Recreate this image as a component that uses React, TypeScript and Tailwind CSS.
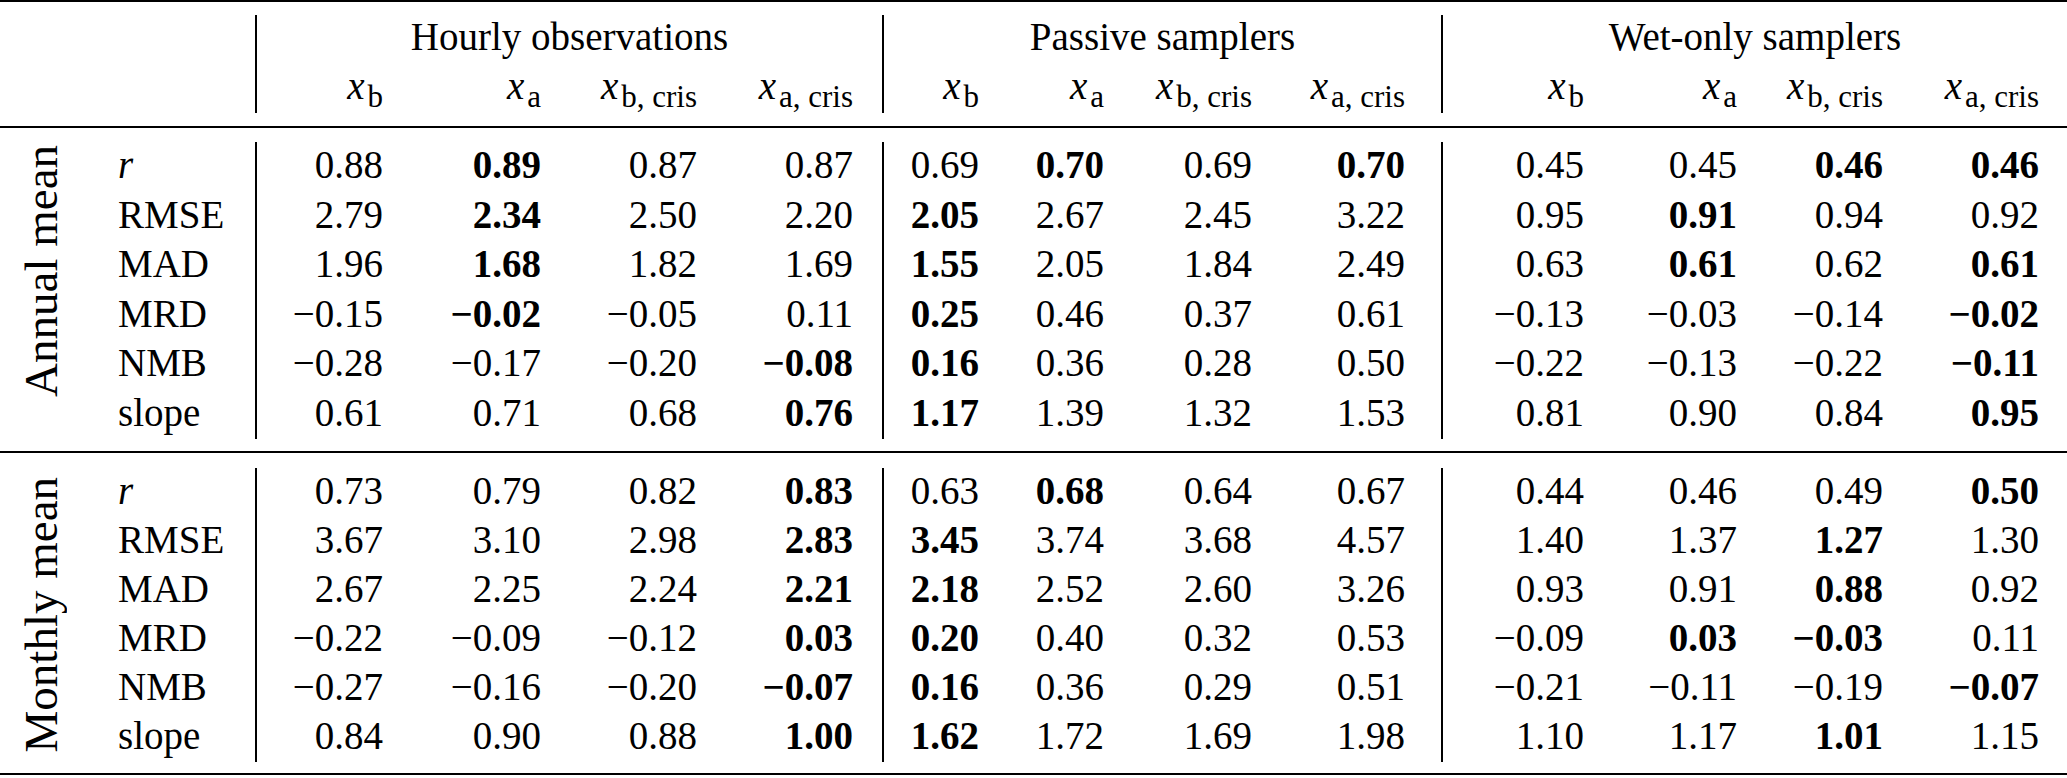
const groups = [
  { title: "Hourly observations", cols: ["w-[126px]", "w-[158px]", "w-[156px]", "w-[156px]"], pad: "pr-[29px]" },
  { title: "Passive samplers", cols: ["w-[95px]", "w-[125px]", "w-[148px]", "w-[153px]"], pad: "pr-[36px]" },
  { title: "Wet-only samplers", cols: ["w-[141px]", "w-[153px]", "w-[146px]", "w-[156px]"], pad: "pr-[28px]" },
]

const subs = ["b", "a", "b, cris", "a, cris"]

const labels = ["r", "RMSE", "MAD", "MRD", "NMB", "slope"]

// values marked with * are set in bold
const annual = [
  ["0.88", "*0.89", "0.87", "0.87", "0.69", "*0.70", "0.69", "*0.70", "0.45", "0.45", "*0.46", "*0.46"],
  ["2.79", "*2.34", "2.50", "2.20", "*2.05", "2.67", "2.45", "3.22", "0.95", "*0.91", "0.94", "0.92"],
  ["1.96", "*1.68", "1.82", "1.69", "*1.55", "2.05", "1.84", "2.49", "0.63", "*0.61", "0.62", "*0.61"],
  ["−0.15", "*−0.02", "−0.05", "0.11", "*0.25", "0.46", "0.37", "0.61", "−0.13", "−0.03", "−0.14", "*−0.02"],
  ["−0.28", "−0.17", "−0.20", "*−0.08", "*0.16", "0.36", "0.28", "0.50", "−0.22", "−0.13", "−0.22", "*−0.11"],
  ["0.61", "0.71", "0.68", "*0.76", "*1.17", "1.39", "1.32", "1.53", "0.81", "0.90", "0.84", "*0.95"],
]

const monthly = [
  ["0.73", "0.79", "0.82", "*0.83", "0.63", "*0.68", "0.64", "0.67", "0.44", "0.46", "0.49", "*0.50"],
  ["3.67", "3.10", "2.98", "*2.83", "*3.45", "3.74", "3.68", "4.57", "1.40", "1.37", "*1.27", "1.30"],
  ["2.67", "2.25", "2.24", "*2.21", "*2.18", "2.52", "2.60", "3.26", "0.93", "0.91", "*0.88", "0.92"],
  ["−0.22", "−0.09", "−0.12", "*0.03", "*0.20", "0.40", "0.32", "0.53", "−0.09", "*0.03", "*−0.03", "0.11"],
  ["−0.27", "−0.16", "−0.20", "*−0.07", "*0.16", "0.36", "0.29", "0.51", "−0.21", "−0.11", "−0.19", "*−0.07"],
  ["0.84", "0.90", "0.88", "*1.00", "*1.62", "1.72", "1.69", "1.98", "1.10", "1.17", "*1.01", "1.15"],
]

function Rule() {
  return <div className="h-[2px] w-full bg-black" />
}

function Sym({ sub }: { sub: string }) {
  return (
    <span className="whitespace-nowrap">
      <span className="pr-[3px] italic">x</span>
      <span className="align-[-8px] text-[31px]">{sub}</span>
    </span>
  )
}

function Value({ v }: { v: string }) {
  const bold = v.startsWith("*")
  return <span className={bold ? "font-bold" : ""}>{bold ? v.slice(1) : v}</span>
}

function Header() {
  return (
    <div className="flex py-[13px]">
      <div className="w-[255px] shrink-0" />
      {groups.map((g) => (
        <div key={g.title} className="flex flex-col border-l-2 border-black">
          <div className="h-[49px] text-center leading-[44px]">{g.title}</div>
          <div className={`flex ${g.pad}`}>
            {g.cols.map((w, i) => (
              <div key={i} className={`${w} h-[49px] text-right leading-[44px]`}>
                <Sym sub={subs[i]} />
              </div>
            ))}
          </div>
        </div>
      ))}
    </div>
  )
}

function Section({
  title,
  rows,
  className,
  labelClass,
  rowClass,
}: {
  title: string
  rows: string[][]
  className: string
  labelClass: string
  rowClass: string
}) {
  return (
    <div className={`flex ${className}`}>
      <div className={`flex w-[100px] shrink-0 items-center pl-[18px] ${labelClass}`}>
        <span className="rotate-180 text-[47px] leading-none whitespace-nowrap [writing-mode:vertical-rl]">{title}</span>
      </div>
      <div className="flex flex-col">
        {rows.map((row, r) => (
          <div key={r} className={`flex leading-[45px] ${rowClass}`}>
            <div className={`w-[155px] shrink-0 pl-[18px] ${r === 0 ? "italic" : ""}`}>{labels[r]}</div>
            {groups.map((g, gi) => (
              <div key={g.title} className={`flex border-l-2 border-black ${g.pad}`}>
                {g.cols.map((w, ci) => (
                  <div key={ci} className={`${w} text-right`}>
                    <Value v={row[gi * 4 + ci]} />
                  </div>
                ))}
              </div>
            ))}
          </div>
        ))}
      </div>
    </div>
  )
}

export default function App() {
  return (
    <div className="h-[778px] w-[2067px] bg-white text-[39px] text-black [font-family:Liberation_Serif,Times_New_Roman,serif]">
      <Rule />
      <Header />
      <Rule />
      <Section
        title="Annual mean"
        rows={annual}
        className="pt-[14px] pb-[12px]"
        labelClass="pb-[40px]"
        rowClass="h-[49.5px]"
      />
      <Rule />
      <Section
        title="Monthly mean"
        rows={monthly}
        className="pt-[15px] pb-[11px]"
        labelClass=""
        rowClass="h-[49px]"
      />
      <Rule />
    </div>
  )
}
